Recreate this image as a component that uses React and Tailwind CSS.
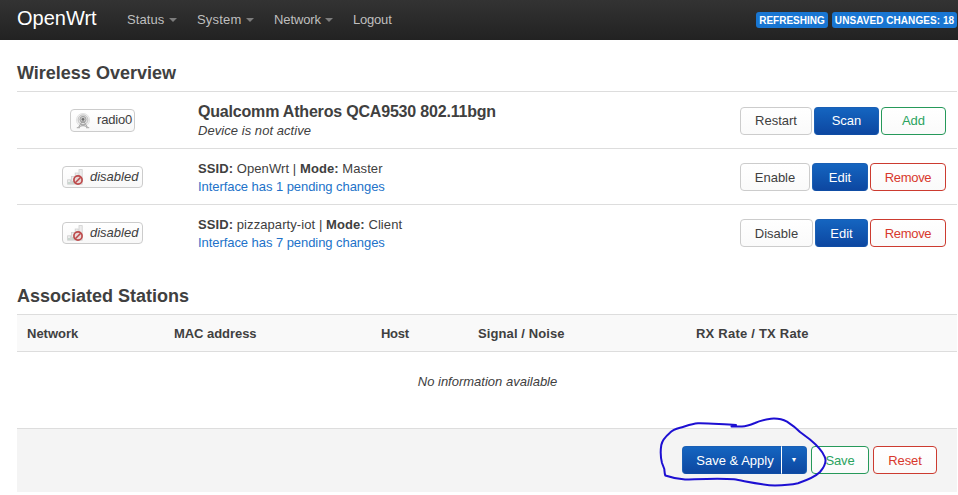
import React from "react";

const navItems = [
  { label: "Status", menu: true, cls: "w-[70px]", text: "w-[42px] tracking-[0.1px]" },
  { label: "System", menu: true, cls: "w-[77px]", text: "w-[49px] tracking-[0.2px]" },
  { label: "Network", menu: true, cls: "w-[79px]", text: "w-[51px] tracking-[-0.1px]" },
  { label: "Logout", menu: false, cls: "", text: "tracking-[-0.2px]" },
];

const tones = {
  plain: "border-[#cccccc] bg-linear-to-b from-white to-[#fafafa] text-[#404040]",
  solid: "border-[#1a5fb4] border-b-[#0f4da5] bg-linear-to-b from-[#1565c0] to-[#0d47a1] text-white",
  green: "border-[#26995a] bg-linear-to-b from-white to-[#fafafa] text-[#2ba35f]",
  red: "border-[#cc3b30] bg-linear-to-b from-white to-[#fafafa] text-[#d8382c]",
};

function Button({ tone, className = "", children }) {
  return (
    <button className={`flex h-7 shrink-0 items-center justify-center rounded-[4px] border text-[13px] leading-[18px] whitespace-nowrap ${tones[tone]} ${className}`}>
      {children}
    </button>
  );
}

function RadioIcon() {
  return (
    <svg width="16" height="16" viewBox="0 0 16 16" fill="none">
      <circle cx="8" cy="7" r="6.6" fill="#f0f0f0" stroke="#dedede" strokeWidth="0.8" />
      <circle cx="8" cy="6.8" r="4.9" fill="#e2e2e2" stroke="#bdbdbd" strokeWidth="0.9" />
      <circle cx="8" cy="6.4" r="3" fill="#cacaca" stroke="#9c9c9c" strokeWidth="0.9" />
      <path d="M8 7 L3.4 14.4 M8 7 L12.6 14.4 M5.6 11 L11.8 13.8 M10.4 11 L4.2 13.8 M6.2 9.4 H9.8" stroke="#a0a0a0" strokeWidth="0.9" />
      <path d="M1.8 14.6 H5 M11 14.6 H14.2" stroke="#b4b4b4" strokeWidth="1.1" />
      <circle cx="8" cy="6.2" r="1.3" fill="#6d6d6d" />
    </svg>
  );
}

function SignalDisabledIcon() {
  return (
    <svg width="16" height="16" viewBox="0 0 16 16" fill="none">
      <g fill="#ededed" stroke="#cfcfcf" strokeWidth="0.8">
        <rect x="0.6" y="10.8" width="3" height="4.4" />
        <rect x="4.4" y="7.4" width="3" height="7.8" />
        <rect x="8.2" y="4" width="3" height="11.2" />
        <rect x="12" y="0.6" width="3.2" height="14.6" />
      </g>
      <path d="M1 13 H3.2 V15 H1 Z M4.8 12 H7 V15 H4.8 Z" fill="#c9d6cf" />
      <circle cx="11" cy="11" r="4.1" fill="#ead8d8" stroke="#bd4a4b" strokeWidth="1.7" />
      <path d="M8.3 13.7 L13.7 8.3" stroke="#bd4a4b" strokeWidth="1.6" />
    </svg>
  );
}

function IfaceBadge({ radio, children }) {
  return (
    <div
      className={`flex items-center rounded-[4px] border border-[#cccccc] bg-linear-to-b from-white to-[#f8f8f8] text-[13px] leading-[18px] ${
        radio ? "h-[23px] w-[65px] pl-[4px]" : "h-[22px] w-[81px] pl-[4px] italic"
      }`}
    >
      {radio ? <RadioIcon /> : <SignalDisabledIcon />}
      <span className={radio ? "-mt-[2px] ml-[6px] tracking-[-0.2px]" : "-mt-px ml-[7px]"}>{children}</span>
    </div>
  );
}

function Network({ ssid, mode, count, children }) {
  return (
    <div className="flex h-14 border-t border-[#dddddd]">
      <div className="flex w-[171px] justify-center pt-[17px]">
        <IfaceBadge>disabled</IfaceBadge>
      </div>
      <div className="flex-1 pt-[11px] pl-[10px] text-[13px] leading-[18px]">
        <div className="tracking-[0.08px]">
          <b>SSID:</b> {ssid} | <b>Mode:</b> {mode}
        </div>
        <a className="block tracking-[-0.06px] text-[#2272c9]">Interface has {count} pending changes</a>
      </div>
      <div className="flex gap-[2px] pt-[14px] pr-[11px]">{children}</div>
    </div>
  );
}

export default function App() {
  return (
    <div className="h-[495px] w-[958px] overflow-hidden bg-white font-['Liberation_Sans',Arial,sans-serif] text-[13px] leading-[18px] text-[#404040]">
      <header className="flex h-10 items-center bg-linear-to-b from-[#333333] to-[#222222] pl-[17px]">
        <div className="w-[110px] pb-[5px] text-[20px] leading-5 text-white">OpenWrt</div>
        <nav className="flex text-[#bfbfbf]">
          {navItems.map((n) => (
            <div key={n.label} className={`flex items-center ${n.cls}`}>
              <span className={n.text}>{n.label}</span>
              {n.menu && (
                <span className="h-0 w-0 border-x-4 border-t-4 border-x-transparent border-t-[#7d7d7d]" />
              )}
            </div>
          ))}
        </nav>
        <div className="ml-auto flex gap-1 pr-px text-[10px] leading-[17px] font-bold whitespace-nowrap text-white">
          <span className="flex h-4 w-[72px] justify-center rounded-[3px] bg-[#1976d2]">REFRESHING</span>
          <span className="flex h-4 w-[125px] justify-center rounded-[3px] bg-[#1976d2] tracking-[0.06px]">UNSAVED CHANGES: 18</span>
        </div>
      </header>

      <main className="pt-[15px] pr-px pl-[17px]">
        <h3 className="h-9 text-[18px] leading-9 font-bold">Wireless Overview</h3>
        <section>
          <div className="flex h-[57px] border-t border-[#dddddd]">
            <div className="flex w-[171px] justify-center pt-[17px]">
              <IfaceBadge radio>radio0</IfaceBadge>
            </div>
            <div className="flex-1 pt-[10px] pl-[10px]">
              <div className="mb-px text-[16px] leading-[19px] font-bold tracking-[-0.19px]">Qualcomm Atheros QCA9530 802.11bgn</div>
              <div className="tracking-[0.05px] italic">Device is not active</div>
            </div>
            <div className="flex gap-[2px] pt-[15px] pr-[11px]">
              <Button tone="plain" className="w-[72px]">Restart</Button>
              <Button tone="solid" className="w-[65px]">Scan</Button>
              <Button tone="green" className="w-[65px]">Add</Button>
            </div>
          </div>
          <Network ssid="OpenWrt" mode="Master" count={1}>
            <Button tone="plain" className="w-[70px] pt-[2px]">Enable</Button>
            <Button tone="solid" className="w-[56px] pt-[2px]">Edit</Button>
            <Button tone="red" className="w-[76px] pt-[2px] tracking-[-0.3px]">Remove</Button>
          </Network>
          <Network ssid="pizzaparty-iot" mode="Client" count={7}>
            <Button tone="plain" className="w-[73px] pt-[2px]">Disable</Button>
            <Button tone="solid" className="w-[53px] pt-[2px]">Edit</Button>
            <Button tone="red" className="w-[76px] pt-[2px] tracking-[-0.3px]">Remove</Button>
          </Network>
        </section>

        <h3 className="mt-[18px] h-9 text-[18px] leading-9 font-bold">Associated Stations</h3>
        <section>
          <div className="flex h-[38px] items-center border-y border-[#dddddd] bg-[#f9f9f9] pt-[2px] pl-[10px] font-bold">
            <div className="w-[147px]">Network</div>
            <div className="w-[207px] tracking-[-0.05px]">MAC address</div>
            <div className="w-[97px] tracking-[-0.3px]">Host</div>
            <div className="w-[218px] tracking-[0.1px]">Signal / Noise</div>
            <div className="tracking-[0.22px]">RX Rate / TX Rate</div>
          </div>
          <div className="flex h-[76px] items-center justify-center pb-[17px] pl-px italic">No information available</div>
        </section>

        <footer className="relative flex h-16 border-t border-[#dddddd] bg-[#f4f4f4] pt-[17px] pr-5">
          <div className="ml-auto flex">
            <Button tone="solid" className="w-[99px] rounded-r-none border-r-0 pt-[2px] pl-[6px]">Save &amp; Apply</Button>
            <Button tone="solid" className="mr-1 w-[26px] rounded-l-none border-l-white">
              <span className="text-[7px]">▼</span>
            </Button>
            <Button tone="green" className="mr-1 w-[58px] pt-[2px] tracking-[-0.2px]">Save</Button>
            <Button tone="red" className="w-[64px] pt-[2px] tracking-[-0.1px]">Reset</Button>
          </div>
          <svg className="absolute -top-[24px] right-0 h-[90px] w-[317px]" viewBox="0 0 317 90" fill="none">
            <path
              d="M96 20 C83 19.8 70 18 58 18.3 C51 19 45 21.5 40 22.7 C35 24 32 25.5 30 27.7 C25 32 22 36 21.3 40 C20.2 47 20.7 53 22 58 L24.3 64 C24.6 67 24.6 69 25.3 70.5 C31 72.5 38 74 45 74.5 C61 74 80 72.8 94 74.3 C107 76.5 121 79.8 135 80.5 C145 80.3 152 79.5 158 78.2 C166 75.5 175 72 180 67 C185 61 186.5 55 184.5 51.5 C182 45 176 39.5 170 34.5 L160 27 C156 23 152 20 147 16.7 C143 14.5 136 13.3 131 13.7 C125 14.5 119 16 115 18 C110 20 106 21.3 102 21.6 L91.5 21.5"
              stroke="#1d0fd2"
              strokeWidth="2"
              strokeLinecap="round"
              strokeLinejoin="round"
            />
          </svg>
        </footer>
      </main>
    </div>
  );
}
